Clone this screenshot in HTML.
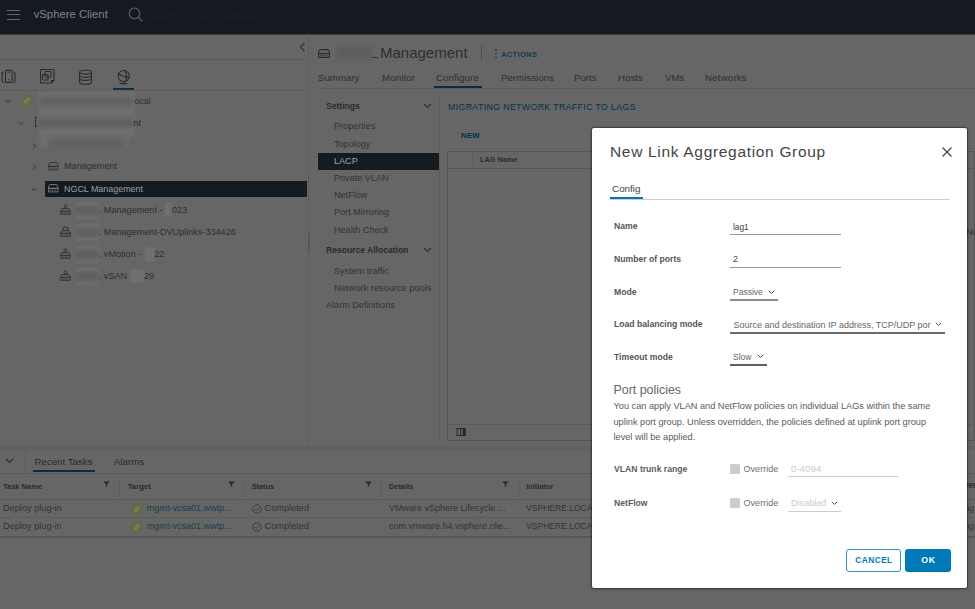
<!DOCTYPE html>
<html><head><meta charset="utf-8">
<style>
*{box-sizing:border-box;margin:0;padding:0}
html,body{width:975px;height:609px;overflow:hidden;background:#666;font-family:"Liberation Sans",sans-serif}
.a{position:absolute}
.t{position:absolute;white-space:nowrap;line-height:20px;height:20px}
.hl{position:absolute;height:1px;background:#5c5c5c}
.vl{position:absolute;width:1px;background:#5c5c5c}
.blur{position:absolute;background:#6a6a6a;filter:blur(2px)}
</style></head><body>
<!-- header -->
<div class="a" style="left:0;top:0;width:975px;height:34px;background:#151a20"></div><div class="a" style="left:0;top:34px;width:975px;height:1px;background:#3b3f44"></div>
<div class="a" style="left:7.2px;top:9.8px;width:13.2px;height:1.1px;background:#62666b"></div>
<div class="a" style="left:7.2px;top:14.1px;width:13.2px;height:1.1px;background:#62666b"></div>
<div class="a" style="left:7.2px;top:18.5px;width:13.2px;height:1.1px;background:#62666b"></div>
<div class="t" style="left:33.7px;top:4px;font-size:11.3px;color:#7d8388">vSphere Client</div>
<svg class="a" style="left:128px;top:7px" width="16" height="16" viewBox="0 0 16 16"><circle cx="6.5" cy="6.5" r="5.3" fill="none" stroke="#55595e" stroke-width="1.3"/><path d="M10.3 10.3 L14.5 14.5" stroke="#55595e" stroke-width="1.4"/></svg>
<div class="t" style="left:149px;top:5.5px;font-size:8.4px;font-weight:700;color:#1a1f25">Search in all environments</div>

<!-- left panel -->
<svg class="a" style="left:298px;top:42px" width="9" height="10" viewBox="0 0 9 10"><path d="M6.5 1 L2.5 5 L6.5 9" fill="none" stroke="#333" stroke-width="1.2"/></svg>
<div class="hl" style="left:0;top:59px;width:308px"></div>
<div class="hl" style="left:0;top:90px;width:308px"></div>
<div class="a" style="left:113px;top:88px;width:21px;height:2px;background:#002f48"></div>
<div class="vl" style="left:308px;top:34px;height:412px"></div><div class="a" style="left:307.5px;top:233px;width:2px;height:16.5px;background:#565656;border-radius:1px"></div>


<!-- left icons row -->
<svg class="a" style="left:0;top:68px" width="18" height="17" viewBox="0 0 18 17" fill="none" stroke="#2b2b2b" stroke-width="1.1"><path d="M3.7 4 C2.4 4 2.1 4.6 2.1 5.6 V12.9 C2.1 13.9 2.4 14.5 3.7 14.5"/><path d="M13.4 4 C14.7 4 15 4.6 15 5.6 V12.9 C15 13.9 14.7 14.5 13.4 14.5"/><rect x="5.5" y="2.4" width="6.6" height="12" rx="1"/><path d="M7.5 4.2 H10.1" stroke-width="0.9"/><circle cx="8.8" cy="11.7" r="0.7" fill="#2b2b2b" stroke="none"/></svg>
<svg class="a" style="left:39px;top:68px" width="17" height="17" viewBox="0 0 17 17" fill="none" stroke="#2b2b2b" stroke-width="1.1">
<path d="M1.5 1.5 H15 V12.5 L12.5 15 H1.5 Z"/><path d="M12.5 15 V12.5 H15"/><rect x="6" y="3.5" width="6" height="5.5" rx="0.6"/><rect x="3.5" y="6.5" width="5.5" height="5.5" rx="0.6"/>
</svg>
<svg class="a" style="left:78px;top:69px" width="16" height="17" viewBox="0 0 16 17" fill="none" stroke="#2b2b2b" stroke-width="1.1"><ellipse cx="7.5" cy="3.2" rx="5.9" ry="1.9"/><path d="M1.6 3.2 V13.2 C1.6 14.5 4.3 15.2 7.5 15.2 C10.7 15.2 13.4 14.5 13.4 13.2 V3.2"/><path d="M1.6 6.6 C1.6 7.8 4.3 8.4 7.5 8.4 C10.7 8.4 13.4 7.8 13.4 6.6"/><path d="M1.6 9.6 C1.6 10.8 4.3 11.4 7.5 11.4 C10.7 11.4 13.4 10.8 13.4 9.6"/></svg>
<svg class="a" style="left:116px;top:69px" width="16" height="17" viewBox="0 0 16 17" fill="none" stroke="#2b2b2b" stroke-width="1.1"><circle cx="7.7" cy="7.1" r="5.6"/><path d="M2.4 4.6 Q6.5 7.6 13.4 8.6"/><path d="M8.6 1.2 Q11.8 6.2 9.4 12.7"/><path d="M3.6 14.6 H11.4" stroke-width="1.3"/><path d="M7.6 12.9 V14.6"/></svg>

<!-- tree -->
<svg class="a" style="left:5px;top:98.8px" width="6" height="5" viewBox="0 0 6 5"><path d="M0.8 1.2 L3 3.6 L5.2 1.2" fill="none" stroke="#2f3438" stroke-width="1"/></svg>
<svg class="a" style="left:21px;top:94px" width="12" height="13" viewBox="0 0 12 13"><path d="M3.4 1.2 H10.8 V8.8 H8.7 V11.6 H1.2 V4.2 H3.4 Z" fill="none" stroke="#5a7428" stroke-width="1.15" stroke-linejoin="round"/><circle cx="7" cy="5.4" r="1.7" fill="#7b828c" stroke="#86702c" stroke-width="1"/><circle cx="4.8" cy="7.9" r="1.7" fill="#7b828c" stroke="#86702c" stroke-width="1"/></svg>
<div class="blur" style="left:38px;top:91px;width:97px;height:46px;background:#707070;filter:blur(1.5px)"></div>
<div class="blur" style="left:40px;top:136px;width:89px;height:12px;background:#707070;filter:blur(1.5px)"></div>
<div class="blur" style="left:40px;top:97px;width:94px;height:9px;background:#5f5f5f;filter:blur(3px)"></div>
<div class="blur" style="left:38px;top:118px;width:96px;height:9px;background:#5d5d5d;filter:blur(3px)"></div>
<div class="blur" style="left:48px;top:138.5px;width:78px;height:8px;background:#5d5d5d;filter:blur(3px)"></div>
<div class="t" style="left:134.5px;top:90.5px;font-size:8.9px;color:#2e2e2e">ocal</div>

<svg class="a" style="left:18px;top:120.8px" width="6" height="5" viewBox="0 0 6 5"><path d="M0.8 1.2 L3 3.6 L5.2 1.2" fill="none" stroke="#2f3438" stroke-width="1"/></svg>
<div class="a" style="left:35px;top:117px;width:2px;height:10px;border:1px solid #333;border-right:none"></div>
<div class="t" style="left:133.5px;top:112.5px;font-size:8.9px;color:#2e2e2e">nt</div>

<svg class="a" style="left:32px;top:142.5px" width="5" height="6" viewBox="0 0 5 6"><path d="M1.2 0.8 L3.6 3 L1.2 5.2" fill="none" stroke="#2f3438" stroke-width="1"/></svg>


<svg class="a" style="left:32px;top:163.5px" width="5" height="6" viewBox="0 0 5 6"><path d="M1.2 0.8 L3.6 3 L1.2 5.2" fill="none" stroke="#2f3438" stroke-width="1"/></svg>
<svg class="a" style="left:48px;top:162px" width="10.5" height="8.5" viewBox="0 0 12 9" preserveAspectRatio="none" fill="none" stroke="#333" stroke-width="1"><path d="M2 0.6 H10 L11.4 3.2 V8.4 H0.6 V3.2 Z"/><path d="M0.6 4.6 H11.4" stroke-width="1.3"/><path d="M2.2 6.6 H9.8" stroke-dasharray="1.5 1" stroke-width="1"/></svg>
<div class="t" style="left:64px;top:156px;font-size:9.1px;color:#2e2e2e">Management</div>

<svg class="a" style="left:31px;top:186.6px" width="6" height="5" viewBox="0 0 6 5"><path d="M0.8 1.2 L3 3.6 L5.2 1.2" fill="none" stroke="#2f3438" stroke-width="1"/></svg>
<div class="a" style="left:45px;top:181px;width:262px;height:16px;background:#141c22"></div>
<svg class="a" style="left:48px;top:184px" width="10.5" height="8.5" viewBox="0 0 12 9" preserveAspectRatio="none" fill="none" stroke="#7d7f80" stroke-width="1"><path d="M2 0.6 H10 L11.4 3.2 V8.4 H0.6 V3.2 Z"/><path d="M0.6 4.6 H11.4" stroke-width="1.3"/><path d="M2.2 6.6 H9.8" stroke-dasharray="1.5 1" stroke-width="1"/></svg>
<div class="t" style="left:64px;top:178.8px;font-size:8.93px;color:#9a9fa3">NGCL Management</div>
<svg class="a" style="left:60px;top:204.2px" width="11" height="11" viewBox="0 0 11 11" fill="none" stroke="#353535" stroke-width="1"><path d="M2 4.6 H9 L10.3 6.6 V10.3 H0.7 V6.6 Z"/><path d="M0.7 7.3 H10.3" stroke-width="1.2"/><path d="M2.2 9 H8.8" stroke-dasharray="1.4 0.9" stroke-width="0.9"/><circle cx="5.5" cy="2.3" r="1.5"/><path d="M5.5 3.8 V5"/></svg>
<div class="blur" style="left:75.5px;top:201.7px;width:23px;height:17px;background:#6e6e6e;filter:blur(1px)"></div><div class="blur" style="left:76px;top:206.2px;width:22px;height:9px;background:#606060;filter:blur(1.5px)"></div>
<svg class="a" style="left:60px;top:226.1px" width="11" height="11" viewBox="0 0 11 11" fill="none" stroke="#353535" stroke-width="1"><path d="M2 4.6 H9 L10.3 6.6 V10.3 H0.7 V6.6 Z"/><path d="M0.7 7.3 H10.3" stroke-width="1.2"/><path d="M2.2 9 H8.8" stroke-dasharray="1.4 0.9" stroke-width="0.9"/><path d="M3.3 1.2 H7.7 V4.6 H3.3 Z"/></svg>
<div class="blur" style="left:75.5px;top:223.6px;width:23px;height:17px;background:#6e6e6e;filter:blur(1px)"></div><div class="blur" style="left:76px;top:228.1px;width:22px;height:9px;background:#606060;filter:blur(1.5px)"></div>
<svg class="a" style="left:60px;top:248.0px" width="11" height="11" viewBox="0 0 11 11" fill="none" stroke="#353535" stroke-width="1"><path d="M2 4.6 H9 L10.3 6.6 V10.3 H0.7 V6.6 Z"/><path d="M0.7 7.3 H10.3" stroke-width="1.2"/><path d="M2.2 9 H8.8" stroke-dasharray="1.4 0.9" stroke-width="0.9"/><circle cx="5.5" cy="2.3" r="1.5"/><path d="M5.5 3.8 V5"/></svg>
<div class="blur" style="left:75.5px;top:245.5px;width:23px;height:17px;background:#6e6e6e;filter:blur(1px)"></div><div class="blur" style="left:76px;top:250.0px;width:22px;height:9px;background:#606060;filter:blur(1.5px)"></div>
<svg class="a" style="left:60px;top:270.0px" width="11" height="11" viewBox="0 0 11 11" fill="none" stroke="#353535" stroke-width="1"><path d="M2 4.6 H9 L10.3 6.6 V10.3 H0.7 V6.6 Z"/><path d="M0.7 7.3 H10.3" stroke-width="1.2"/><path d="M2.2 9 H8.8" stroke-dasharray="1.4 0.9" stroke-width="0.9"/><circle cx="5.5" cy="2.3" r="1.5"/><path d="M5.5 3.8 V5"/></svg>
<div class="blur" style="left:75.5px;top:267.5px;width:23px;height:17px;background:#6e6e6e;filter:blur(1px)"></div><div class="blur" style="left:76px;top:272.0px;width:22px;height:9px;background:#606060;filter:blur(1.5px)"></div>

<div class="blur" style="left:164.5px;top:203px;width:7px;height:14px;background:#707070;filter:blur(1px)"></div>
<div class="blur" style="left:144.5px;top:247px;width:10px;height:14px;background:#707070;filter:blur(1px)"></div>
<div class="blur" style="left:129.5px;top:269px;width:14px;height:14px;background:#707070;filter:blur(1px)"></div>
<div class="t" style="left:98.8px;top:199.7px;font-size:9.1px;color:#2e2e2e">. Management -</div>
<div class="t" style="left:172px;top:199.7px;font-size:9.1px;color:#2e2e2e">023</div>
<div class="t" style="left:98.8px;top:221.6px;font-size:9.1px;color:#2e2e2e">. Management-DVUplinks-334426</div>
<div class="t" style="left:98.8px;top:243.5px;font-size:9.1px;color:#2e2e2e">. vMotion -</div>
<div class="t" style="left:154.2px;top:243.5px;font-size:9.1px;color:#2e2e2e">22</div>
<div class="t" style="left:98.8px;top:265.5px;font-size:9.1px;color:#2e2e2e">. vSAN</div>
<div class="t" style="left:144px;top:265.5px;font-size:9.1px;color:#2e2e2e">29</div>

<!-- right panel header -->
<div class="t" style="left:380px;top:43px;font-size:15px;color:#2e2e2e">Management</div>
<div class="vl" style="left:481px;top:45px;height:16px;background:#505050"></div>
<div class="t" style="left:501px;top:45.2px;font-size:7.6px;font-weight:700;letter-spacing:0.3px;color:#113a50">ACTIONS</div>
<div class="t" style="left:318px;top:68px;font-size:9.7px;color:#2e2e2e">Summary</div>
<div class="t" style="left:382px;top:68px;font-size:9.7px;letter-spacing:0.13px;color:#2e2e2e">Monitor</div>
<div class="t" style="left:436px;top:68px;font-size:9.7px;letter-spacing:0.1px;color:#2e2e2e">Configure</div>
<div class="t" style="left:501px;top:68px;font-size:9.7px;letter-spacing:0px;color:#2e2e2e">Permissions</div>
<div class="t" style="left:574px;top:68px;font-size:9.7px;color:#2e2e2e">Ports</div>
<div class="t" style="left:618px;top:68px;font-size:9.7px;letter-spacing:0px;color:#2e2e2e">Hosts</div>
<div class="t" style="left:665px;top:68px;font-size:9.7px;letter-spacing:0px;color:#2e2e2e">VMs</div>
<div class="t" style="left:705px;top:68px;font-size:9.7px;letter-spacing:0.19px;color:#2e2e2e">Networks</div>
<div class="hl" style="left:318px;top:88px;width:657px"></div>
<div class="a" style="left:434px;top:86px;width:48px;height:2px;background:#002f48"></div>


<!-- right header icon + blur -->
<svg class="a" style="left:318px;top:49px" width="12" height="9" viewBox="0 0 12 9" preserveAspectRatio="none" fill="none" stroke="#2e2e2e" stroke-width="1.1"><path d="M2 0.6 H10 L11.4 3.2 V8.4 H0.6 V3.2 Z"/><path d="M0.6 4.6 H11.4" stroke-width="1.3"/><path d="M2.2 6.6 H9.8" stroke-dasharray="1.5 1" stroke-width="1"/></svg>
<div class="blur" style="left:336px;top:46px;width:36px;height:13px;background:#5e5e5e;filter:blur(2px)"></div>
<div class="a" style="left:372px;top:57px;width:6px;height:1.2px;background:#333"></div>
<div class="a" style="left:494.8px;top:48.8px;width:1.8px;height:1.8px;background:#0d3a52;border-radius:1px"></div>
<div class="a" style="left:494.8px;top:52.6px;width:1.8px;height:1.8px;background:#0d3a52;border-radius:1px"></div>
<div class="a" style="left:494.8px;top:56.6px;width:1.8px;height:1.8px;background:#0d3a52;border-radius:1px"></div>

<!-- settings nav -->
<div class="t" style="left:326px;top:96px;font-size:8.6px;font-weight:700;color:#2b2b2b">Settings</div>
<svg class="a" style="left:423px;top:103px" width="9" height="6" viewBox="0 0 9 6"><path d="M1 1 L4.5 4.5 L8 1" fill="none" stroke="#333" stroke-width="1.1"/></svg>
<div class="t" style="left:334px;top:116px;font-size:9.1px;color:#333">Properties</div>
<div class="t" style="left:334px;top:133.5px;font-size:9.1px;color:#333">Topology</div>
<div class="a" style="left:318px;top:153px;width:121px;height:17px;background:#141c22"></div>
<div class="t" style="left:334px;top:150.5px;font-size:9.1px;color:#a0a5a8">LACP</div>
<div class="t" style="left:334px;top:167.5px;font-size:9.1px;color:#333">Private VLAN</div>
<div class="t" style="left:334px;top:185px;font-size:9.1px;color:#333">NetFlow</div>
<div class="t" style="left:334px;top:202px;font-size:9.1px;color:#333">Port Mirroring</div>
<div class="t" style="left:334px;top:219.5px;font-size:9.1px;color:#333">Health Check</div>
<div class="t" style="left:326px;top:240px;font-size:8.55px;font-weight:700;color:#2b2b2b">Resource Allocation</div>
<svg class="a" style="left:423px;top:247px" width="9" height="6" viewBox="0 0 9 6"><path d="M1 1 L4.5 4.5 L8 1" fill="none" stroke="#333" stroke-width="1.1"/></svg>
<div class="t" style="left:334px;top:260.5px;font-size:9.1px;color:#333">System traffic</div>
<div class="t" style="left:334px;top:277.5px;font-size:9.29px;color:#333">Network resource pools</div>
<div class="t" style="left:326px;top:294.5px;font-size:9.1px;color:#333">Alarm Definitions</div>
<div class="vl" style="left:439px;top:95px;height:345px"></div>

<!-- content -->
<div class="t" style="left:448px;top:96.5px;font-size:8.7px;letter-spacing:0.42px;font-weight:400;color:#00324b">MIGRATING NETWORK TRAFFIC TO LAGS</div>
<div class="t" style="left:461px;top:125.5px;font-size:8px;font-weight:700;letter-spacing:0.1px;color:#00324b">NEW</div>
<div class="a" style="left:447px;top:151px;width:528px;height:290px;border:1px solid #565656"></div>
<div class="hl" style="left:447px;top:168px;width:528px;background:#565656"></div>
<div class="vl" style="left:472px;top:154px;height:11px"></div>
<div class="t" style="left:480px;top:149.5px;font-size:7.3px;font-weight:700;color:#2b2b2b">LAG Name</div>
<div class="hl" style="left:447px;top:424px;width:528px"></div>
<svg class="a" style="left:456px;top:427px" width="11" height="10" viewBox="0 0 11 10"><rect x="1" y="1.5" width="8.5" height="7" fill="none" stroke="#2b2b2b" stroke-width="1"/><path d="M4.5 1.5 V8.5" stroke="#2b2b2b" stroke-width="1"/><rect x="6.5" y="1.5" width="3" height="7" fill="#2b2b2b"/></svg>
<div class="t" style="left:966px;top:221.5px;font-size:9.2px;color:#2e2e2e">No</div>
<div class="t" style="left:964px;top:475.5px;font-size:8.2px;font-weight:700;color:#2b2b2b">ver</div>
<div class="t" style="left:964px;top:498px;font-size:9.1px;color:#1f3b4a">ng</div>
<div class="t" style="left:964px;top:516px;font-size:9.1px;color:#1f3b4a">ng</div>

<!-- bottom panel -->
<div class="a" style="left:0;top:445.5px;width:975px;height:3px;background:#606060"></div>
<svg class="a" style="left:5px;top:458px" width="9" height="6" viewBox="0 0 9 6"><path d="M1 1 L4.5 4.5 L8 1" fill="none" stroke="#2b2b2b" stroke-width="1.1"/></svg>
<div class="vl" style="left:24.5px;top:448.5px;height:24.5px"></div>
<div class="t" style="left:34.5px;top:451.5px;font-size:9.7px;color:#2b2b2b">Recent Tasks</div>
<div class="a" style="left:33px;top:470px;width:62px;height:2px;background:#002f48"></div>
<div class="t" style="left:114px;top:451.5px;font-size:9.7px;color:#2b2b2b">Alarms</div>
<div class="hl" style="left:0;top:472.5px;width:975px"></div>
<div class="t" style="left:3px;top:476.7px;font-size:7.5px;font-weight:700;color:#2b2b2b">Task Name</div>
<svg class="a" style="left:102.9px;top:480.8px" width="7" height="6" viewBox="0 0 7 6"><path d="M0.3 0.4 H6.7 L4.2 3 V5.6 H2.8 V3 Z" fill="#262626"/></svg>
<div class="vl" style="left:119px;top:476.5px;height:20px"></div>
<div class="t" style="left:127.7px;top:476.7px;font-size:7.75px;font-weight:700;color:#2b2b2b">Target</div>
<svg class="a" style="left:227.6px;top:480.8px" width="7" height="6" viewBox="0 0 7 6"><path d="M0.3 0.4 H6.7 L4.2 3 V5.6 H2.8 V3 Z" fill="#262626"/></svg>
<div class="vl" style="left:243px;top:476.5px;height:20px"></div>
<div class="t" style="left:251.7px;top:476.7px;font-size:7.3px;font-weight:700;color:#2b2b2b">Status</div>
<svg class="a" style="left:364.5px;top:480.8px" width="7" height="6" viewBox="0 0 7 6"><path d="M0.3 0.4 H6.7 L4.2 3 V5.6 H2.8 V3 Z" fill="#262626"/></svg>
<div class="vl" style="left:380.5px;top:476.5px;height:20px"></div>
<div class="t" style="left:389px;top:476.7px;font-size:7.35px;font-weight:700;color:#2b2b2b">Details</div>
<svg class="a" style="left:501.8px;top:480.8px" width="7" height="6" viewBox="0 0 7 6"><path d="M0.3 0.4 H6.7 L4.2 3 V5.6 H2.8 V3 Z" fill="#262626"/></svg>
<div class="vl" style="left:518px;top:476.5px;height:20px"></div>
<div class="t" style="left:526.2px;top:476.7px;font-size:7.45px;font-weight:700;color:#2b2b2b">Initiator</div>
<div class="hl" style="left:0;top:499px;width:975px"></div>
<div class="hl" style="left:0;top:517px;width:975px"></div>
<div class="hl" style="left:0;top:536px;width:975px;height:1.5px;background:#575757"></div>
<div class="t" style="left:3px;top:497.8px;font-size:9.2px;color:#333">Deploy plug-in</div>
<svg class="a" style="left:130.5px;top:502.5px" width="11.5" height="12.5" viewBox="0 0 12 13"><path d="M3.4 1.2 H10.8 V8.8 H8.7 V11.6 H1.2 V4.2 H3.4 Z" fill="none" stroke="#5a7428" stroke-width="1.15" stroke-linejoin="round"/><circle cx="7" cy="5.4" r="1.7" fill="#7b828c" stroke="#86702c" stroke-width="1"/><circle cx="4.8" cy="7.9" r="1.7" fill="#7b828c" stroke="#86702c" stroke-width="1"/></svg>
<div class="t" style="left:146.8px;top:497.8px;font-size:9.05px;color:#1f3b4a">mgmt-vcsa01.wwtp...</div>
<svg class="a" style="left:251.5px;top:503.5px" width="10" height="10" viewBox="0 0 10 10" fill="none" stroke="#2e4a2a" stroke-width="1"><circle cx="5" cy="5" r="4.2"/><path d="M2.8 5 L4.4 6.6 L7.3 3.6"/></svg>
<div class="t" style="left:264.6px;top:497.8px;font-size:9.2px;color:#333">Completed</div>
<div class="t" style="left:389px;top:497.8px;font-size:9px;color:#333">VMware vSphere Lifecycle ...</div>
<div class="t" style="left:526.2px;top:497.8px;font-size:8.5px;color:#333">VSPHERE.LOCAL</div>
<div class="t" style="left:3px;top:515.9px;font-size:9.2px;color:#333">Deploy plug-in</div>
<svg class="a" style="left:130.5px;top:520.6px" width="11.5" height="12.5" viewBox="0 0 12 13"><path d="M3.4 1.2 H10.8 V8.8 H8.7 V11.6 H1.2 V4.2 H3.4 Z" fill="none" stroke="#5a7428" stroke-width="1.15" stroke-linejoin="round"/><circle cx="7" cy="5.4" r="1.7" fill="#7b828c" stroke="#86702c" stroke-width="1"/><circle cx="4.8" cy="7.9" r="1.7" fill="#7b828c" stroke="#86702c" stroke-width="1"/></svg>
<div class="t" style="left:146.8px;top:515.9px;font-size:9.05px;color:#1f3b4a">mgmt-vcsa01.wwtp...</div>
<svg class="a" style="left:251.5px;top:521.6px" width="10" height="10" viewBox="0 0 10 10" fill="none" stroke="#2e4a2a" stroke-width="1"><circle cx="5" cy="5" r="4.2"/><path d="M2.8 5 L4.4 6.6 L7.3 3.6"/></svg>
<div class="t" style="left:264.6px;top:515.9px;font-size:9.2px;color:#333">Completed</div>
<div class="t" style="left:389px;top:515.9px;font-size:9px;color:#333">com.vmware.h4.vsphere.clie...</div>
<div class="t" style="left:526.2px;top:515.9px;font-size:8.5px;color:#333">VSPHERE.LOCAL</div>

<!-- overlay modal -->
<div class="a" style="left:592px;top:128px;width:375px;height:460px;background:#fff;border-radius:2px;box-shadow:0 0 1px 1px rgba(0,0,0,0.35),0 1px 4px rgba(0,0,0,0.2)"></div>

<div class="t" style="left:610px;top:142px;font-size:15.5px;letter-spacing:0.68px;color:#444">New Link Aggregation Group</div>
<svg class="a" style="left:941px;top:146px" width="12" height="12" viewBox="0 0 12 12"><path d="M1.5 1.5 L10.5 10.5 M10.5 1.5 L1.5 10.5" stroke="#444" stroke-width="1.2"/></svg>
<div class="t" style="left:612px;top:178.5px;font-size:9.9px;color:#444">Config</div>
<div class="a" style="left:610px;top:198.5px;width:340px;height:1px;background:#ccc"></div>
<div class="a" style="left:610px;top:197px;width:33px;height:2.3px;background:#0079b8"></div>

<div class="t" style="left:614px;top:216px;font-size:8.65px;font-weight:700;color:#555">Name</div>
<div class="t" style="left:733px;top:217.3px;font-size:8.3px;color:#444">lag1</div>
<div class="a" style="left:730px;top:234px;width:111px;height:1px;background:#9a9a9a"></div>

<div class="t" style="left:614px;top:248.5px;font-size:8.65px;font-weight:700;color:#555">Number of ports</div>
<div class="t" style="left:733px;top:249.3px;font-size:9px;color:#444">2</div>
<div class="a" style="left:730px;top:266.5px;width:111px;height:1px;background:#9a9a9a"></div>

<div class="t" style="left:614px;top:281.5px;font-size:8.65px;font-weight:700;color:#555">Mode</div>
<div class="t" style="left:733px;top:282px;font-size:8.5px;color:#666">Passive</div>
<svg class="a" style="left:767.5px;top:289.8px" width="7" height="4.5" viewBox="0 0 7 4.5"><path d="M0.8 0.8 L3.5 3.4 L6.2 0.8" fill="none" stroke="#444" stroke-width="1"/></svg>
<div class="a" style="left:730px;top:299px;width:48px;height:2px;background:#8c8c8c"></div>

<div class="t" style="left:614px;top:314.2px;font-size:8.65px;font-weight:700;color:#555">Load balancing mode</div>
<div class="t" style="left:733.5px;top:315px;font-size:9px;color:#666">Source and destination IP address, TCP/UDP por</div>
<svg class="a" style="left:934.5px;top:321.8px" width="7" height="4.5" viewBox="0 0 7 4.5"><path d="M0.8 0.8 L3.5 3.4 L6.2 0.8" fill="none" stroke="#444" stroke-width="1"/></svg>
<div class="a" style="left:730px;top:332px;width:215px;height:1.5px;background:#6a6a6a"></div>

<div class="t" style="left:614px;top:346.7px;font-size:8.65px;font-weight:700;color:#555">Timeout mode</div>
<div class="t" style="left:733px;top:347px;font-size:8.5px;color:#666">Slow</div>
<svg class="a" style="left:756.5px;top:354.3px" width="7" height="4.5" viewBox="0 0 7 4.5"><path d="M0.8 0.8 L3.5 3.4 L6.2 0.8" fill="none" stroke="#444" stroke-width="1"/></svg>
<div class="a" style="left:730px;top:364px;width:37px;height:1.5px;background:#606060"></div>

<div class="t" style="left:613.5px;top:379.5px;font-size:12.4px;color:#666">Port policies</div>
<div class="a" style="left:613.5px;top:399.2px;width:340px;font-size:9.2px;line-height:15.6px;color:#5a5a5a;white-space:nowrap">You can apply VLAN and NetFlow policies on individual LAGs within the same<br>uplink port group. Unless overridden, the policies defined at uplink port group<br>level will be applied.</div>

<div class="t" style="left:614px;top:458.8px;font-size:8.65px;font-weight:700;color:#5c5c5c">VLAN trunk range</div>
<div class="a" style="left:729.5px;top:464px;width:10px;height:9.8px;background:#ccc;border-radius:1.5px"></div>
<div class="t" style="left:743.5px;top:458.8px;font-size:9.1px;color:#707070">Override</div>
<div class="t" style="left:791px;top:458.8px;font-size:9.7px;color:#ccc">0-4094</div>
<div class="a" style="left:788px;top:476px;width:110px;height:1px;background:#ccc"></div>

<div class="t" style="left:614px;top:493px;font-size:8.65px;font-weight:700;color:#5c5c5c">NetFlow</div>
<div class="a" style="left:729.5px;top:498.3px;width:10px;height:9.8px;background:#ccc;border-radius:1.5px"></div>
<div class="t" style="left:743.5px;top:493px;font-size:9.1px;color:#707070">Override</div>
<div class="t" style="left:791px;top:493px;font-size:9.1px;color:#ccc">Disabled</div>
<svg class="a" style="left:830.5px;top:500.8px" width="7" height="4.5" viewBox="0 0 7 4.5"><path d="M0.8 0.8 L3.5 3.4 L6.2 0.8" fill="none" stroke="#555" stroke-width="1"/></svg>
<div class="a" style="left:788px;top:510.5px;width:53px;height:1px;background:#ccc"></div>

<div class="a" style="left:846px;top:549px;width:55px;height:23px;border:1px solid #3a8fc2;border-radius:3px"></div>
<div class="t" style="left:846.5px;top:549.8px;width:55px;text-align:center;font-size:8.3px;font-weight:700;letter-spacing:0.45px;color:#0079b8">CANCEL</div>
<div class="a" style="left:905px;top:549px;width:46px;height:23px;background:#0079b8;border-radius:3px"></div>
<div class="t" style="left:905.5px;top:549.8px;width:46px;text-align:center;font-size:8.8px;font-weight:700;letter-spacing:0.6px;color:#fff">OK</div>

</body></html>
